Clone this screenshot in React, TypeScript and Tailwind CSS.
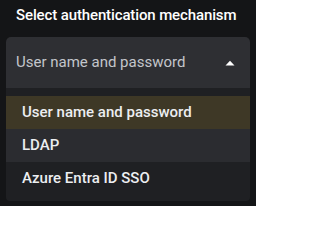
export default function App() {
  const options = [
    { id: 'password', label: 'User name and password', state: 'selected' },
    { id: 'ldap', label: 'LDAP', state: 'hover' },
    { id: 'azure', label: 'Azure Entra ID SSO', state: 'idle' },
  ]

  return (
    <div className="w-[256px] h-[206px] bg-[#141517] font-['Roboto',sans-serif] px-[6px] pt-[5px]">
      <label className="block pl-[10px] text-[15px] leading-[20px] font-medium tracking-[-0.12px] text-white">
        Select authentication mechanism
      </label>

      <div className="mt-[12px] flex h-[51px] items-center justify-between rounded-t-[5px] bg-[#2e2f33] pl-[10px] pr-[15px]">
        <span className="text-[15px] text-[#c3c6cb]">User name and password</span>
        <svg width="10" height="6" viewBox="0 0 10 6" className="mt-[1px]">
          <path d="M0.5 5.5 L5 0.8 L9.5 5.5 Z" fill="#ffffff" />
        </svg>
      </div>

      <ul className="rounded-b-[4px] bg-[#1f2023] pt-[8px] pb-[6px]">
        {options.map((option) => (
          <li
            key={option.id}
            className={`flex h-[33px] items-center pl-[16px] text-[15px] font-medium text-[#eceef1] ${
              option.state === 'selected'
                ? 'bg-[#3e3826]'
                : option.state === 'hover'
                ? 'bg-[#2b2c30]'
                : ''
            }`}
          >
            {option.label}
          </li>
        ))}
      </ul>
    </div>
  )
}
